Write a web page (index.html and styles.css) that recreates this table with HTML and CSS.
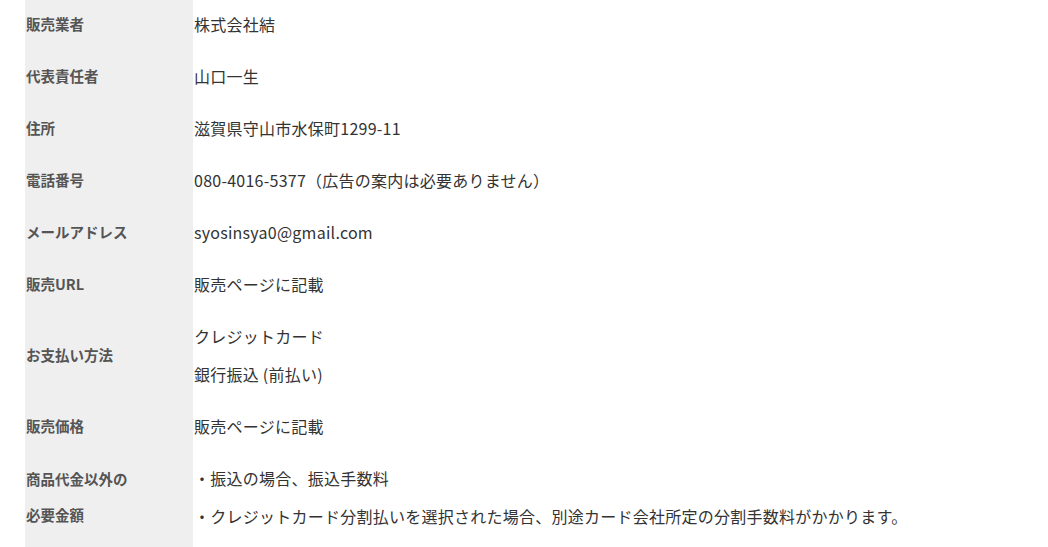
FILE: index.html
```html
<!DOCTYPE html>
<html>
<head>
  <meta charset="utf-8">
  <title>特定商取引法に基づく表記</title>
  <link rel="stylesheet" href="styles.css">
</head>
<body>
  <table class="law-table">
    <tr>
      <th>販売業者</th>
      <td>株式会社結</td>
    </tr>
    <tr>
      <th>代表責任者</th>
      <td>山口一生</td>
    </tr>
    <tr>
      <th>住所</th>
      <td>滋賀県守山市水保町1299-11</td>
    </tr>
    <tr>
      <th>電話番号</th>
      <td>080-4016-5377（広告の案内は必要ありません）</td>
    </tr>
    <tr>
      <th>メールアドレス</th>
      <td>syosinsya0@gmail.com</td>
    </tr>
    <tr>
      <th>販売URL</th>
      <td>販売ページに記載</td>
    </tr>
    <tr>
      <th>お支払い方法</th>
      <td>クレジットカード<br>銀行振込 (前払い)</td>
    </tr>
    <tr>
      <th>販売価格</th>
      <td>販売ページに記載</td>
    </tr>
    <tr>
      <th>商品代金以外の<br>必要金額</th>
      <td>・振込の場合、振込手数料<br>・クレジットカード分割払いを選択された場合、別途カード会社所定の分割手数料がかかります。</td>
    </tr>
  </table>
</body>
</html>
```

FILE: styles.css
```css
body {
  margin: 0;
  padding: 0 25px;
  background: #fff;
  color: #333;
  font-family: "Noto Sans CJK JP", "Noto Sans", sans-serif;
}
.law-table {
  border-collapse: collapse;
  margin-top: -2px;
  width: 100%;
}
.law-table th,
.law-table td {
  padding: 7px 1px 7px 1px;
  vertical-align: middle;
  text-align: left;
}
.law-table th {
  width: 166px;
  background: #efefef;
  color: #555;
  font-size: 14.5px;
  font-weight: bold;
  line-height: 36px;
}
.law-table td {
  font-size: 16px;
  letter-spacing: 0.25px;
  line-height: 38px;
}
.law-table tr:last-child th,
.law-table tr:last-child td {
  padding-bottom: 14px;
}
```
